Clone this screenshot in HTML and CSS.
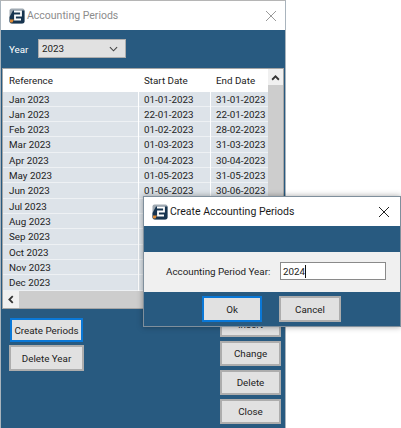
FILE: index.html
```html
<!DOCTYPE html>
<html lang="en">
<head>
<meta charset="utf-8">
<title>Accounting Periods</title>
<link rel="stylesheet" href="styles.css">
</head>
<body>
<div class="desktop">
  <section class="window main-window">
    <header class="titlebar">
      <svg class="app-icon" viewBox="0 0 16 16"><rect x="0.5" y="0.5" width="15" height="15" rx="2" fill="#9fa9b2"/><path d="M4 2.5H15.5V13Q15.5 15.5 13 15.5H3Q0.5 15.5 0.5 13V9Z" fill="#17344f"/><path d="M5 3.5H12V7.5H6V11.5H12" fill="none" stroke="#fff" stroke-width="1.8"/><path d="M1 11.5L5 11.5L3.5 14.5H1Z" fill="#dd8a36"/></svg>
      <span class="title dim">Accounting Periods</span>
      <svg class="close dim-close" viewBox="0 0 10 10"><path d="M0 0L10 10M10 0L0 10" stroke="currentColor" stroke-width="1" fill="none"/></svg>
    </header>
    <div class="year-row">
      <label class="year-label">Year</label>
      <div class="select"><span>2023</span><svg class="chev" viewBox="0 0 10 6"><path d="M1 1L5 5L9 1" fill="none" stroke="#444" stroke-width="1.2"/></svg></div>
    </div>
    <div class="table-box">
      <div class="table-main">
        <div class="cols">
          <div class="row head"><span class="c1">Reference</span><span class="c2">Start Date</span><span class="c3">End Date</span></div>
          <div class="row"><span class="c1">Jan 2023</span><span class="c2">01-01-2023</span><span class="c3">31-01-2023</span></div>
          <div class="row"><span class="c1">Jan 2023</span><span class="c2">22-01-2023</span><span class="c3">22-01-2023</span></div>
          <div class="row"><span class="c1">Feb 2023</span><span class="c2">01-02-2023</span><span class="c3">28-02-2023</span></div>
          <div class="row"><span class="c1">Mar 2023</span><span class="c2">01-03-2023</span><span class="c3">31-03-2023</span></div>
          <div class="row"><span class="c1">Apr 2023</span><span class="c2">01-04-2023</span><span class="c3">30-04-2023</span></div>
          <div class="row"><span class="c1">May 2023</span><span class="c2">01-05-2023</span><span class="c3">31-05-2023</span></div>
          <div class="row"><span class="c1">Jun 2023</span><span class="c2">01-06-2023</span><span class="c3">30-06-2023</span></div>
          <div class="row"><span class="c1">Jul 2023</span><span class="c2">01-07-2023</span><span class="c3">31-07-2023</span></div>
          <div class="row"><span class="c1">Aug 2023</span><span class="c2">01-08-2023</span><span class="c3">31-08-2023</span></div>
          <div class="row"><span class="c1">Sep 2023</span><span class="c2">01-09-2023</span><span class="c3">30-09-2023</span></div>
          <div class="row"><span class="c1">Oct 2023</span><span class="c2">01-10-2023</span><span class="c3">31-10-2023</span></div>
          <div class="row"><span class="c1">Nov 2023</span><span class="c2">01-11-2023</span><span class="c3">30-11-2023</span></div>
          <div class="row"><span class="c1">Dec 2023</span><span class="c2">01-12-2023</span><span class="c3">31-12-2023</span></div>
        </div>
        <div class="vscroll">
          <svg class="arrow" viewBox="0 0 8 6"><path d="M1 5L4 2L7 5" fill="none" stroke="#333" stroke-width="1.6"/></svg>
          <div class="vthumb"></div>
        </div>
      </div>
      <div class="hscroll">
        <svg class="harrow" viewBox="0 0 6 8"><path d="M5 1L2 4L5 7" fill="none" stroke="#333" stroke-width="1.6"/></svg>
        <div class="hthumb"></div>
      </div>
    </div>
    <div class="actions">
      <div class="left-actions">
        <button class="btn create focus">Create Periods</button>
        <button class="btn delyear">Delete Year</button>
      </div>
      <div class="right-actions">
        <button class="btn side">Insert</button>
        <button class="btn side">Change</button>
        <button class="btn side">Delete</button>
        <button class="btn side">Close</button>
      </div>
    </div>
  </section>

  <section class="window dialog">
    <header class="titlebar dlg-title">
      <svg class="app-icon" viewBox="0 0 16 16"><rect x="0.5" y="0.5" width="15" height="15" rx="2" fill="#9fa9b2"/><path d="M4 2.5H15.5V13Q15.5 15.5 13 15.5H3Q0.5 15.5 0.5 13V9Z" fill="#17344f"/><path d="M5 3.5H12V7.5H6V11.5H12" fill="none" stroke="#fff" stroke-width="1.8"/><path d="M1 11.5L5 11.5L3.5 14.5H1Z" fill="#dd8a36"/></svg>
      <span class="title">Create Accounting Periods</span>
      <svg class="close" viewBox="0 0 10 10"><path d="M0 0L10 10M10 0L0 10" stroke="currentColor" stroke-width="1" fill="none"/></svg>
    </header>
    <div class="dlg-spacer"></div>
    <div class="dlg-form">
      <label class="dlg-label">Accounting Period Year:</label>
      <div class="input"><span>2024</span><span class="caret"></span></div>
    </div>
    <div class="dlg-buttons">
      <button class="btn dlg-btn ok focus">Ok</button>
      <button class="btn dlg-btn cancel">Cancel</button>
    </div>
  </section>
</div>
</body>
</html>
```
FILE: styles.css
```css
* { box-sizing: border-box; }
html, body { margin: 0; padding: 0; background: #fff; }
body { font-family: Roboto, "Liberation Sans", sans-serif; font-size: 9.8px; color: #222; }
.desktop { position: relative; width: 401px; height: 428px; overflow: hidden; background: #fff; }

.window { display: flex; flex-direction: column; background: #285a80; }
.main-window { width: 286px; height: 428px; border: 1px solid #a9b4bd; border-top-color: #b5b5b5; border-bottom: 0; }
.titlebar { display: flex; align-items: center; height: 29px; flex: none; background: #fff; padding: 0 0 0 8px; }
.app-icon { width: 16px; height: 16px; flex: none; }
.title { margin-left: 2px; font-size: 10.5px; flex: 1; white-space: nowrap; }
.dim { color: #8c8c8c; }
.close { width: 10px; height: 10px; flex: none; margin-right: 9px; color: #222; }
.dim-close { color: #9a9a9a; }

.year-row { display: flex; align-items: center; height: 38px; flex: none; padding-left: 8px; }
.year-label { color: #fff; width: 29px; }
.select { display: flex; align-items: center; justify-content: space-between; width: 88px; height: 19px; margin-top: -1px; background: #e1e1e1; border: 1px solid #adadad; padding: 0 7px 0 3px; color: #222; }
.chev { width: 9px; height: 6px; }

.table-box { display: flex; flex-direction: column; margin-left: 1px; width: 282px; height: 241px; border: 1px solid #a5a5a5; background: #fff; flex: none; }
.table-main { display: flex; flex: 1; min-height: 0; }
.cols { display: flex; flex-direction: column; width: 265px; flex: none; }
.row { display: flex; height: 15.33px; line-height: 15px; gap: 1px; flex: none; }
.row span { background: #dde3e9; box-shadow: inset 0 -1px 0 #eef1f4; padding-left: 5px; white-space: nowrap; overflow: hidden; color: #222; }
.row.head { height: 22.5px; line-height: 24px; }
.row.head span { background: #fff; box-shadow: none; color: #222; }
.row .c1 { width: 135px; flex: none; padding-left: 6px; }
.c2 { width: 71px; flex: none; }
.c3 { flex: 1; }
.vscroll { width: 15px; flex: none; background: #f0f0f0; display: flex; flex-direction: column; align-items: center; }
.arrow { width: 9px; height: 7px; margin: 5px 0 4px; flex: none; }
.vthumb { width: 15px; flex: 1; background: #cdcdcd; }
.hscroll { height: 17px; flex: none; display: flex; align-items: center; background: #f0f0f0; }
.harrow { width: 7px; height: 9px; margin: 0 5px 0 4px; flex: none; }
.hthumb { height: 100%; flex: 1; background: #cdcdcd; margin-right: 17px; }

.btn { font-family: inherit; font-size: 9.8px; color: #222; background: #e1e1e1; border: 2px solid #adadad; padding: 0; display: block; white-space: nowrap; }
.btn.focus { border-color: #0a78d7; }

.actions { display: flex; justify-content: space-between; flex: 1; padding: 0 4px 0 8px; }
.left-actions { display: flex; flex-direction: column; }
.create { width: 73px; height: 24px; margin: 9px 0 3px 1px; }
.delyear { width: 75px; height: 26px; }
.right-actions { display: flex; flex-direction: column; gap: 4px; margin-top: 3px; }
.side { width: 61px; height: 25px; }

.dialog { position: absolute; left: 143px; top: 196px; width: 258px; height: 131px; border: 1px solid #7f8f9c; box-shadow: 0 0 6px rgba(0,0,0,.35); }
.dlg-title { padding-left: 8px; }
.dlg-title .title { color: #1a1a1a; }
.dlg-title .close { margin-right: 11px; }
.dlg-spacer { height: 26px; flex: none; }
.dlg-form { display: flex; align-items: center; height: 40px; flex: none; background: #f0f0f0; padding: 0 0 2px 22px; }
.dlg-label { width: 114px; white-space: nowrap; }
.input { display: flex; align-items: center; width: 106px; height: 18px; background: #fff; border: 1px solid #8a8a8a; padding-left: 2px; color: #222; }
.caret { width: 1px; height: 13px; background: #111; }
.dlg-buttons { display: flex; gap: 17px; padding: 4px 0 0 58px; }
.dlg-btn { height: 26px; }
.ok { width: 60px; }
.cancel { width: 62px; }
```
